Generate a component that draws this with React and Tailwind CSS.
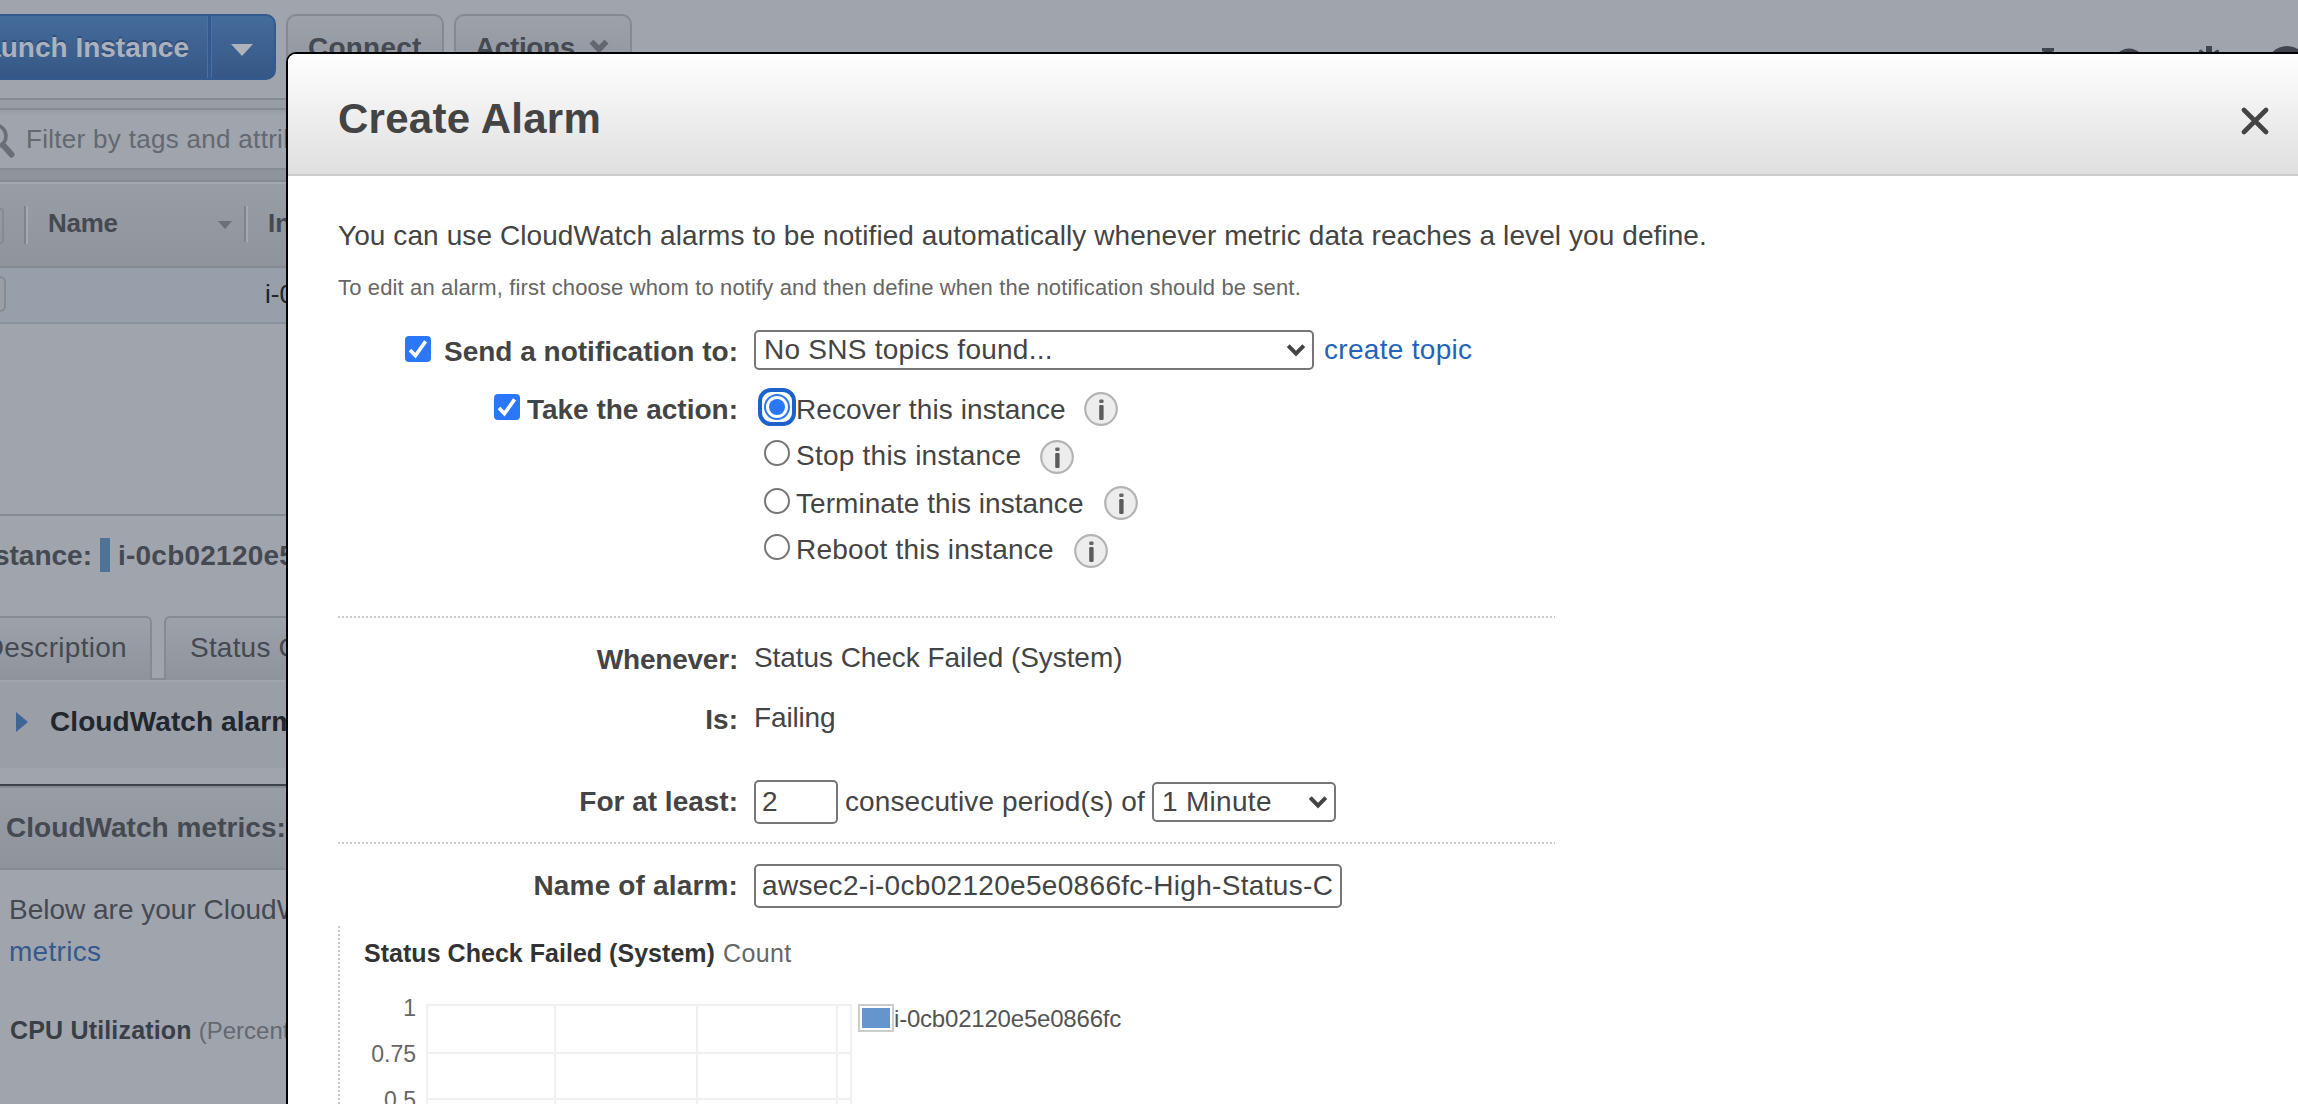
import React from "react";

const grid = { xs: [427, 555, 697, 837, 851], ys: [1005, 1053, 1099] };

function DottedLine({ className = "" }) {
  return (
    <div
      className={`h-0.5 w-[1217px] bg-[repeating-linear-gradient(90deg,#cacaca_0_2px,#fff_2px_4px)] ${className}`}
    />
  );
}

function Checkbox({ className = "" }) {
  return (
    <span className={`block size-[26px] shrink-0 rounded-[4px] bg-[#2a78f8] ${className}`}>
      <svg viewBox="0 0 26 26" className="size-[26px]" fill="none" stroke="#fff" strokeWidth="3.6">
        <path d="M5 14l5.4 5.6L20.6 5.4" />
      </svg>
    </span>
  );
}

function Radio({ checked }) {
  if (checked) {
    return (
      <span className="-mx-1.5 -mt-0.5 block size-[38px] shrink-0 rounded-[13px] border-4 border-[#1d62ca] bg-white p-0.5">
        <span className="block size-[26px] rounded-full border-2 border-[#2a78f8] p-[3px]">
          <span className="block size-4 rounded-full bg-[#2a78f8]" />
        </span>
      </span>
    );
  }
  return (
    <span className="mt-1 block size-[26px] shrink-0 rounded-full border-2 border-[#767676] bg-white" />
  );
}

function Info({ className }) {
  return (
    <svg viewBox="0 0 34 34" className={`size-[34px] shrink-0 ${className}`}>
      <circle cx="17" cy="17" r="15.8" fill="#ededed" stroke="#b4b4b4" strokeWidth="2.2" />
      <rect x="15.2" y="7.5" width="4.4" height="3.4" rx="1.2" fill="#666" />
      <rect x="15.2" y="13" width="4.4" height="15" rx="1.2" fill="#5c5c5c" />
    </svg>
  );
}

function Chevron() {
  return (
    <svg viewBox="0 0 20 14" className="h-3.5 w-5" fill="none" stroke="#444" strokeWidth="4">
      <path d="M2.2 2.6L10 10.6L17.8 2.6" />
    </svg>
  );
}

function Label({ children, className = "" }) {
  return (
    <div className={`mr-4 flex w-[400px] shrink-0 justify-end font-bold ${className}`}>
      {children}
    </div>
  );
}

function Backdrop() {
  return (
    <div className="flex flex-col text-[28px] leading-10 whitespace-nowrap text-[#444952]">
      <div className="flex h-[98px] items-start pt-3.5">
        <div className="flex h-[66px] w-[276px] shrink-0 overflow-hidden rounded-r-[10px] border-2 border-l-0 border-[#34598c] bg-linear-to-b from-[#446c9b] to-[#365786]">
          <div className="flex w-[208px] justify-end overflow-hidden border-r border-[#4d709f] pt-3 pr-[18px] font-bold text-[#abb2bd] text-shadow-[0_-2px_0_#2f4d78]">
            Launch Instance
          </div>
          <div className="w-[3px] bg-[#34598c]" />
          <div className="flex-1 border-l border-[#4d709f] pt-[28px] pl-[19px]">
            <svg viewBox="0 0 22 12" className="h-3 w-[22px]">
              <path d="M0 0H22L11 12Z" fill="#aeb3ba" />
            </svg>
          </div>
        </div>
        <div className="ml-2.5 h-[66px] w-[158px] rounded-[10px] border-2 border-[#858991] bg-linear-to-b from-[#9da1a9] to-[#90949c] pt-3 pl-5 font-bold tracking-[0.22px]">
          Connect
        </div>
        <div className="ml-2.5 flex h-[66px] w-[178px] rounded-[10px] border-2 border-[#858991] bg-linear-to-b from-[#9da1a9] to-[#90949c] pt-3 pl-[19px] font-bold tracking-[-0.4px]">
          Actions
          <svg viewBox="0 0 20 14" className="mt-3 ml-3.5 h-3.5 w-5" fill="none" stroke="#63676f" strokeWidth="5.5">
            <path d="M2.5 1.5L10 9.5L17.5 1.5" />
          </svg>
        </div>
        <svg viewBox="2030 40 268 40" className="mt-[26px] ml-auto h-10 w-[268px]" fill="#41464e">
          <path d="M2042 48h12v3l-2 1v8l8 16h-24l8-16v-8l-2-1z" />
          <circle cx="2129" cy="64" r="13" fill="none" stroke="#41464e" strokeWidth="5" />
          <path d="M2206 46h6v6h-6zM2199 50.5l2-1 5 4h6l5-4 2 1v20h-20z" />
          <circle cx="2287" cy="66" r="20" />
        </svg>
      </div>
      <div className="h-2.5 border-t-2 border-[#868a92] bg-[#989ca4]" />
      <div className="flex h-[62px] border-y-2 border-[#868a92] bg-linear-to-b from-[#989ca4] via-[#a0a4ac] via-10% to-[#a0a4ac] text-[26px] tracking-[0.3px] text-[#646870]">
        <svg viewBox="0 0 26 58" className="h-[58px] w-[26px] shrink-0" fill="none" stroke="#6a6e76">
          <circle cx="-5" cy="26" r="11" strokeWidth="3.5" />
          <path d="M3 35l8.500 9.500" strokeWidth="6" strokeLinecap="round" />
        </svg>
        <div className="pt-[9px]">Filter by tags and attributes</div>
      </div>
      <div className="h-2.5 bg-[#8f939b]" />
      <div className="flex h-[88px] items-start border-y-2 border-[#868a92] bg-linear-to-b from-[#999da5] to-[#8f939b] text-[26px] font-bold shadow-[inset_0_2px_0_#a3a7af]">
        <div className="mt-[26px] h-9 w-1 rounded-r-[8px] border-2 border-l-0 border-[#868a92]" />
        <div className="mt-6 ml-5 h-[38px] w-1 border-l-2 border-[#7f838b] bg-[#a5a9b1]" />
        <div className="mt-[21px] ml-5 w-[170px] tracking-[-0.25px]">Name</div>
        <svg viewBox="0 0 14 8" className="mt-[39px] h-2 w-3.5">
          <path d="M0 0H14L7 8Z" fill="#6b6f77" />
        </svg>
        <div className="mt-6 ml-3 h-9 w-1 border-l-2 border-[#7f838b] bg-[#a5a9b1]" />
        <div className="mt-[21px] ml-5">Instance ID</div>
      </div>
      <div className="flex h-14 items-start border-b-2 border-[#8c9098] bg-[#979fab] text-[26px] text-[#20242c]">
        <div className="mt-2 h-9 w-1.5 rounded-r-[8px] border-2 border-l-0 border-[#868a92] bg-[#9a9ea6]" />
        <div className="mt-1.5 ml-[259px]">i-0cb02120e5e0866fc</div>
      </div>
      <div className="h-[190px]" />
      <div className="flex h-[102px] items-start border-t-2 border-[#868a92] pt-5 font-bold">
        <div className="flex w-[93px] justify-end overflow-hidden pr-px">
          <span>Instance:</span>
        </div>
        <div className="mt-0.5 ml-[7px] h-[34px] w-2.5 bg-[#4f7396]" />
        <div className="ml-2 tracking-[0.23px]">i-0cb02120e5e0866fc</div>
      </div>
      <div className="flex h-16 items-stretch">
        <div className="flex w-[152px] shrink-0 justify-end overflow-hidden rounded-tr-[6px] border-t-2 border-r-2 border-[#868a92] bg-linear-to-b from-[#9da1a9] to-[#8f939b] pt-2.5 pr-[23px] tracking-[0.3px]">
          Description
        </div>
        <div className="w-3 border-b-2 border-[#868a92]" />
        <div className="w-[300px] rounded-tl-[6px] border-t-2 border-l-2 border-[#868a92] bg-linear-to-b from-[#9da1a9] to-[#8f939b] pt-2.5 pl-6 tracking-[0.2px]">
          Status Checks
        </div>
      </div>
      <div className="flex h-[88px] items-start border-t-2 border-[#a0a4ac] bg-[#9a9ea6] pt-5 font-bold tracking-[0.09px] text-[#22262e]">
        <svg viewBox="0 0 12 20" className="mt-2.5 ml-4 h-5 w-3">
          <path d="M0 0L12 10L0 20Z" fill="#3f6597" />
        </svg>
        <div className="ml-[22px]">CloudWatch alarms:</div>
      </div>
      <div className="mt-4 h-[86px] border-t-2 border-b-2 border-t-[#3e434b] border-b-[#868a92] bg-linear-to-b from-[#999da5] to-[#8f939b] pt-[22px] pl-1.5 font-bold tracking-[0.05px] shadow-[inset_0_2px_0_#868a92]">
        CloudWatch metrics:
      </div>
      <div className="pt-[19px] pl-[9px] leading-[42px]">
        <div>Below are your CloudWatch metrics</div>
        <div className="tracking-[0.3px] text-[#355a8b]">metrics</div>
      </div>
      <div className="mt-[37px] flex items-baseline pl-2.5 text-[25px] tracking-[0.17px]">
        <span className="font-bold text-[#3a3f47]">CPU Utilization</span>
        <span className="ml-[7px] text-2xl tracking-[0px] text-[#646870]">(Percent)</span>
      </div>
    </div>
  );
}

function Chart() {
  return (
    <div className="mt-[18px] flex h-[178px]">
      <div className="w-0.5 bg-[repeating-linear-gradient(180deg,#cacaca_0_2px,#fff_2px_4px)]" />
      <div className="flex flex-col">
        <div className="mt-[7px] ml-6 flex h-10 text-[25px] leading-10">
          <span className="font-bold tracking-[0.03px] text-[#333]">
            Status Check Failed (System)
          </span>
          <span className="ml-2 tracking-[0.4px] text-[#666]">Count</span>
        </div>
        <div className="flex items-start">
          <svg
            viewBox="340 973 514 131"
            className="h-[131px] w-[514px]"
            fill="#666"
            fontSize="23"
            textAnchor="end"
          >
            <g stroke="#f0f0f0" strokeWidth="2">
              {grid.xs.map((x) => (
                <path key={x} d={`M${x} 1004V1104`} />
              ))}
              {grid.ys.map((y) => (
                <path key={y} d={`M426 ${y}H852`} />
              ))}
            </g>
            <text x="416" y="1016">1</text>
            <text x="416" y="1062">0.75</text>
            <text x="416" y="1108">0.5</text>
          </svg>
          <div className="mt-[31px] ml-1 h-7 w-9 border-2 border-[#ccc] bg-white p-0.5">
            <div className="h-5 bg-[#6495cc]" />
          </div>
          <div className="mt-[26px] text-2xl leading-10 tracking-[-0.2px] text-[#545454]">
            i-0cb02120e5e0866fc
          </div>
        </div>
      </div>
    </div>
  );
}

function Field({ children, className }) {
  return (
    <div
      className={`flex shrink-0 items-center rounded-[5px] border-2 border-[#767676] bg-white ${className}`}
    >
      {children}
    </div>
  );
}

function AlarmDialog() {
  return (
    <div className="absolute top-[52px] left-[286px] h-[1100px] w-[2060px] overflow-hidden rounded-tl-[10px] border-2 border-black bg-white text-[28px] leading-10 whitespace-nowrap text-[#444]">
      <div className="flex h-[122px] items-center border-b-2 border-[#ccc] bg-linear-to-b from-white to-[#dfdfdf] pl-[50px]">
        <h1 className="pt-2.5 text-[42px] leading-[48px] font-bold tracking-[0.26px]">
          Create Alarm
        </h1>
        <svg
          viewBox="0 0 28 28"
          className="mt-3.5 mr-[75px] ml-auto size-7"
          fill="none"
          stroke="#444"
          strokeWidth="4.6"
          strokeLinecap="round"
        >
          <path d="M3 3L25 25M25 3L3 25" />
        </svg>
      </div>
      <div className="flex flex-col pt-10 pl-[50px]">
        <p className="tracking-[0.085px]">
          You can use CloudWatch alarms to be notified automatically whenever metric data reaches a level you define.
        </p>
        <p className="mt-4 text-[22px] leading-8 tracking-[0.14px] text-[#666]">
          To edit an alarm, first choose whom to notify and then define when the notification should be sent.
        </p>

        <div className="mt-[26px] flex h-[60px] items-start">
          <Label className="pt-0.5">
            <Checkbox className="mt-1 mr-[13px]" />
            Send a notification to:
          </Label>
          <Field className="h-10 w-[560px] justify-between pr-1.5 pl-2 leading-9 tracking-[0.25px]">
            No SNS topics found...
            <Chevron />
          </Field>
          <a className="ml-2.5 tracking-[0.3px] text-[#2463b7]">create topic</a>
        </div>

        <div className="flex h-[226px] items-start">
          <Label>
            <Checkbox className="mt-1 mr-[7px]" />
            Take the action:
          </Label>
          <div className="flex flex-col pl-2.5">
            <div className="flex h-[46px] items-start">
              <Radio checked />
              <span className="ml-1.5 tracking-[0.1px]">Recover this instance</span>
              <Info className="mt-0.5 ml-[18px]" />
            </div>
            <div className="flex h-12 items-start">
              <Radio />
              <span className="ml-1.5 tracking-[0.24px]">Stop this instance</span>
              <Info className="mt-1 ml-[19px]" />
            </div>
            <div className="flex h-[46px] items-start">
              <Radio />
              <span className="ml-1.5 tracking-[0.05px]">Terminate this instance</span>
              <Info className="mt-0.5 ml-5" />
            </div>
            <div className="flex items-start">
              <Radio />
              <span className="ml-1.5 tracking-[0.2px]">Reboot this instance</span>
              <Info className="mt-1 ml-5" />
            </div>
          </div>
        </div>

        <DottedLine />

        <div className="mt-5 flex h-[60px] items-start">
          <Label className="pt-0.5 tracking-[-0.22px]">Whenever:</Label>
          <span className="tracking-[-0.07px]">Status Check Failed (System)</span>
        </div>
        <div className="flex h-[82px] items-start">
          <Label className="pt-0.5">Is:</Label>
          <span className="tracking-[-0.15px]">Failing</span>
        </div>
        <div className="flex h-[62px] items-start">
          <Label className="pt-0.5">For at least:</Label>
          <Field className="h-11 w-[84px] pl-1.5">2</Field>
          <span className="mt-0.5 ml-[7px] tracking-[0.11px]">consecutive period(s) of</span>
          <Field className="mt-0.5 ml-[7px] h-10 w-[184px] justify-between pr-1.5 pl-2 leading-9 tracking-[0.31px]">
            1 Minute
            <Chevron />
          </Field>
        </div>

        <DottedLine />

        <div className="mt-5 flex h-11 items-start">
          <Label className="pt-0.5 tracking-[0.16px]">Name of alarm:</Label>
          <Field className="h-11 w-[588px] overflow-hidden px-1.5 tracking-[0.31px]">
            awsec2-i-0cb02120e5e0866fc-High-Status-C
          </Field>
        </div>

        <Chart />
      </div>
    </div>
  );
}

export default function App() {
  return (
    <div className='relative h-[1104px] w-full overflow-hidden bg-[#a0a4ac] font-["Liberation_Sans",Arial,sans-serif]'>
      <Backdrop />
      <AlarmDialog />
    </div>
  );
}
